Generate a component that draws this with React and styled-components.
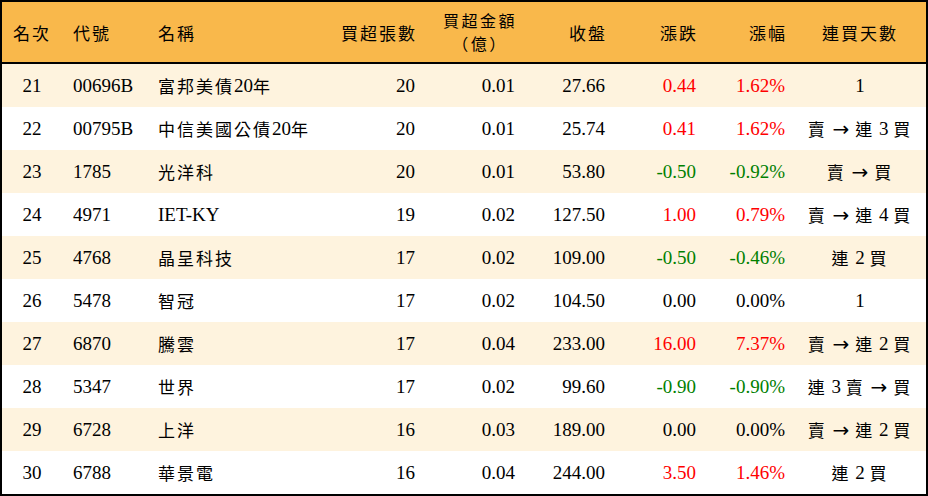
import React from 'react';
import styled, { createGlobalStyle } from 'styled-components';

const GlobalStyle = createGlobalStyle`
    html, body {
        margin: 0;
        padding: 0;
        background: #fff;
    }
    body {
        font-family: "Liberation Serif", "Noto Sans CJK TC", serif;
        color: #000;
    }
`;

const rows = [
    { rank: 21, code: '00696B', name: '富邦美債20年', lots: 20, amount: '0.01', close: '27.66', change: '0.44', pct: '1.62%', streak: '1' },
    { rank: 22, code: '00795B', name: '中信美國公債20年', lots: 20, amount: '0.01', close: '25.74', change: '0.41', pct: '1.62%', streak: '賣 → 連 3 買' },
    { rank: 23, code: '1785', name: '光洋科', lots: 20, amount: '0.01', close: '53.80', change: '-0.50', pct: '-0.92%', streak: '賣 → 買' },
    { rank: 24, code: '4971', name: 'IET-KY', lots: 19, amount: '0.02', close: '127.50', change: '1.00', pct: '0.79%', streak: '賣 → 連 4 買' },
    { rank: 25, code: '4768', name: '晶呈科技', lots: 17, amount: '0.02', close: '109.00', change: '-0.50', pct: '-0.46%', streak: '連 2 買' },
    { rank: 26, code: '5478', name: '智冠', lots: 17, amount: '0.02', close: '104.50', change: '0.00', pct: '0.00%', streak: '1' },
    { rank: 27, code: '6870', name: '騰雲', lots: 17, amount: '0.04', close: '233.00', change: '16.00', pct: '7.37%', streak: '賣 → 連 2 買' },
    { rank: 28, code: '5347', name: '世界', lots: 17, amount: '0.02', close: '99.60', change: '-0.90', pct: '-0.90%', streak: '連 3 賣 → 買' },
    { rank: 29, code: '6728', name: '上洋', lots: 16, amount: '0.03', close: '189.00', change: '0.00', pct: '0.00%', streak: '賣 → 連 2 買' },
    { rank: 30, code: '6788', name: '華景電', lots: 16, amount: '0.04', close: '244.00', change: '3.50', pct: '1.46%', streak: '連 2 買' },
];

// up / down / flat colour for 漲跌 and 漲幅
const trend = (value) => {
    const n = parseFloat(value);
    if (n > 0) return 'up';
    if (n < 0) return 'down';
    return 'flat';
};

// split text into CJK runs and latin/digit runs so each gets its own size
const kindOf = (part) => {
    if (part === '→') return 'arrow';
    if (/[\u4e00-\u9fff]/.test(part)) return 'cjk';
    return 'latin';
};

const splitRuns = (text) => text.match(/[\u4e00-\u9fff]+|→|[^\u4e00-\u9fff→]+/g) || [];

const Mixed = ({ text }) => (
    <>
        {splitRuns(text).map((part, i) => (
            <Run key={i} kind={kindOf(part)}>{part}</Run>
        ))}
    </>
);

const App = () => {
    return (
        <>
            <GlobalStyle />
            <Board>
                <HeaderRow>
                    <HeadCell align="center">名次</HeadCell>
                    <HeadCell align="left" pad="11px">代號</HeadCell>
                    <HeadCell align="left" pad="8px">名稱</HeadCell>
                    <HeadCell align="right">買超張數</HeadCell>
                    <HeadCell align="right">
                        <TwoLine>
                            <span>買超金額</span>
                            <span>（億）</span>
                        </TwoLine>
                    </HeadCell>
                    <HeadCell align="right">收盤</HeadCell>
                    <HeadCell align="right">漲跌</HeadCell>
                    <HeadCell align="right">漲幅</HeadCell>
                    <HeadCell align="center" pad="9px">連買天數</HeadCell>
                </HeaderRow>
                {rows.map((row, i) => (
                    <Row key={row.rank} shaded={i % 2 === 0}>
                        <NumCell align="center">{row.rank}</NumCell>
                        <NumCell align="left" pad="11px">{row.code}</NumCell>
                        <NameCell><Mixed text={row.name} /></NameCell>
                        <NumCell align="right">{row.lots}</NumCell>
                        <NumCell align="right">{row.amount}</NumCell>
                        <NumCell align="right">{row.close}</NumCell>
                        <NumCell align="right" tone={trend(row.change)}>{row.change}</NumCell>
                        <NumCell align="right" tone={trend(row.pct)}>{row.pct}</NumCell>
                        <StreakCell><Mixed text={row.streak} /></StreakCell>
                    </Row>
                ))}
            </Board>
        </>
    );
};

const columns = '60px 88px 180px 85px 100px 90px 91px 89px 1fr';

const Board = styled.div`
    width: 928px;
    height: 496px;
    box-sizing: border-box;
    border: 2px solid #000;
    display: flex;
    flex-direction: column;
    overflow: hidden;
`;

const HeaderRow = styled.div`
    display: grid;
    grid-template-columns: ${columns};
    height: 60px;
    background: #f9b84b;
    border-bottom: 2px solid #000;
`;

const Row = styled.div`
    display: grid;
    grid-template-columns: ${columns};
    height: 43px;
    background: ${(p) => (p.shaded ? '#fef3de' : '#ffffff')};
`;

const justify = (p) => (p.align === 'left' ? 'flex-start' : p.align === 'right' ? 'flex-end' : 'center');

const HeadCell = styled.div`
    display: flex;
    align-items: center;
    justify-content: ${justify};
    padding-left: ${(p) => p.pad || '0'};
    font-family: "Noto Sans CJK TC", sans-serif;
    font-size: 17px;
    letter-spacing: 2px;
    margin-right: ${(p) => (p.align === 'right' ? '-2px' : '0')};
`;

const TwoLine = styled.div`
    display: flex;
    flex-direction: column;
    align-items: center;
    font-size: 16px;
    letter-spacing: 2.5px;
    line-height: 23px;
`;

const toneColor = { up: '#ff0000', down: '#008000', flat: '#000' };

const NumCell = styled.div`
    display: flex;
    align-items: center;
    justify-content: ${justify};
    padding-left: ${(p) => p.pad || '0'};
    font-size: 19px;
    color: ${(p) => toneColor[p.tone] || '#000'};
`;

const NameCell = styled.div`
    display: flex;
    align-items: center;
    padding-left: 8px;
    white-space: nowrap;
`;

const StreakCell = styled.div`
    display: flex;
    align-items: center;
    justify-content: center;
    padding-left: 9px;
    white-space: pre;
`;

const Run = styled.span`
    white-space: pre;
    ${(p) => p.kind === 'cjk' && `
        font-family: "Noto Sans CJK TC", sans-serif;
        font-size: 17px;
        letter-spacing: 2px;
    `}
    ${(p) => p.kind === 'latin' && `
        font-family: "Liberation Serif", serif;
        font-size: 19px;
    `}
    ${(p) => p.kind === 'arrow' && `
        font-family: "DejaVu Sans", sans-serif;
        font-size: 20px;
        margin: 0 1px;
    `}
`;

export default App;
